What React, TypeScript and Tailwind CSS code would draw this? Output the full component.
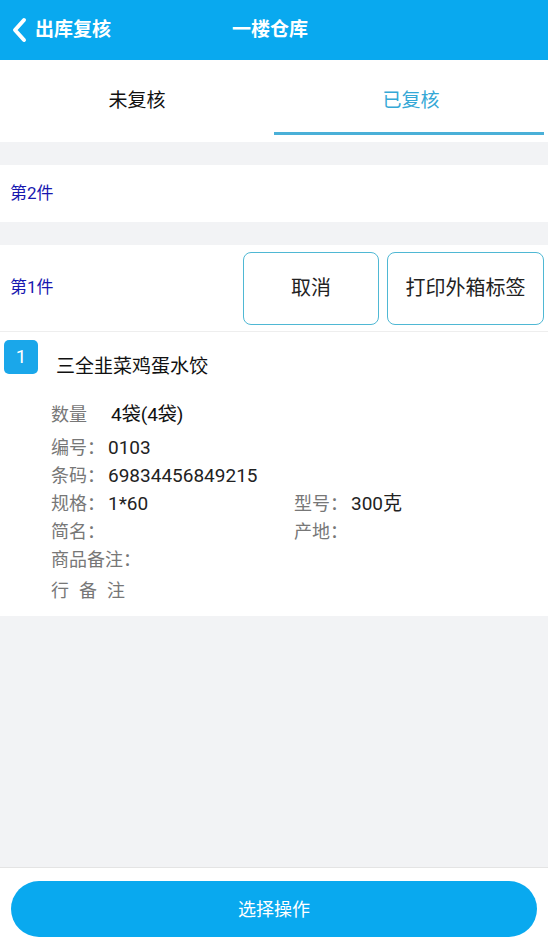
const font = { fontFamily: 'Roboto, "Noto Sans CJK SC", sans-serif' };

function Field({ label, value }: { label: string; value?: string }) {
  return (
    <div className="flex h-[28px] items-center leading-none">
      <span className="text-[18px] text-[#777]">{label}</span>
      {value ? <span className="ml-[3px] text-[19px] text-[#222]">{value}</span> : null}
    </div>
  );
}

export default function App() {
  return (
    <div className="flex h-[942px] w-[548px] flex-col bg-[#f2f3f5]" style={font}>
      {/* header */}
      <div className="relative flex h-[60px] items-center bg-[#09a9ef] text-white">
        <div className="flex items-center pl-[10px]">
          <svg width="18" height="26" viewBox="0 0 18 26" fill="none">
            <path d="M14 3 L5 13 L14 23" stroke="white" strokeWidth="4" strokeLinecap="round" strokeLinejoin="round" />
          </svg>
          <span className="ml-[7px] text-[19px] font-bold">出库复核</span>
        </div>
        <span className="absolute left-[232px] text-[19px] font-bold">一楼仓库</span>
      </div>

      {/* tabs */}
      <div className="flex h-[82px] bg-white">
        <div className="flex flex-1 items-center justify-center pt-[1px] text-[19px] text-[#111]">未复核</div>
        <div className="relative flex flex-1 items-center justify-center pt-[1px] text-[19px] text-[#35a8d6]">
          已复核
          <div className="absolute bottom-[7px] left-0 right-[4px] h-[3px] bg-[#4ab0d8]" />
        </div>
      </div>

      <div className="h-[23px]" />

      <div className="flex h-[57px] items-center bg-white pl-[10px] text-[17px] text-[#1818b0]">第2件</div>

      <div className="h-[23px]" />

      <div className="flex h-[87px] items-center border-b border-[#eee] bg-white pl-[10px] pr-[4px]">
        <span className="flex-1 text-[17px] text-[#1818b0]">第1件</span>
        <button className="h-[73px] w-[136px] rounded-[8px] border border-[#4fb8d4] text-[20px] text-[#222]">取消</button>
        <button className="ml-[8px] h-[73px] w-[157px] rounded-[8px] border border-[#4fb8d4] text-[20px] text-[#222]">打印外箱标签</button>
      </div>

      {/* item */}
      <div className="bg-white pb-[8px] pt-[8px]">
        <div className="flex items-start">
          <div className="ml-[4px] flex h-[34px] w-[34px] items-center justify-center rounded-[5px] bg-[#1aa7ea] text-[19px] text-white">1</div>
          <div className="ml-[18px] mt-[13px] text-[19px] text-[#111]">三全韭菜鸡蛋水饺</div>
        </div>
        <div className="mt-[18px] pl-[51px]">
          <div className="flex h-[30px] items-center leading-none">
            <span className="text-[18px] text-[#777]">数量</span>
            <span className="ml-[24px] text-[19px] text-[#111]">4袋(4袋)</span>
          </div>
          <div className="mt-[4px]">
            <Field label="编号：" value="0103" />
            <Field label="条码：" value="69834456849215" />
            <div className="grid grid-cols-[243px_1fr]">
              <Field label="规格：" value="1*60" />
              <Field label="型号：" value="300克" />
              <Field label="简名：" />
              <Field label="产地：" />
            </div>
            <Field label="商品备注：" />
            <div className="flex h-[34px] items-center text-[18px] tracking-[10px] text-[#777]">行备注</div>
          </div>
        </div>
      </div>

      <div className="flex-1" />

      <div className="flex h-[75px] items-start border-t border-[#e4e4e4] bg-white px-[11px] pt-[13px]">
        <button className="h-[56px] w-full rounded-full bg-[#09a9ef] text-[18px] text-white">选择操作</button>
      </div>
    </div>
  );
}
